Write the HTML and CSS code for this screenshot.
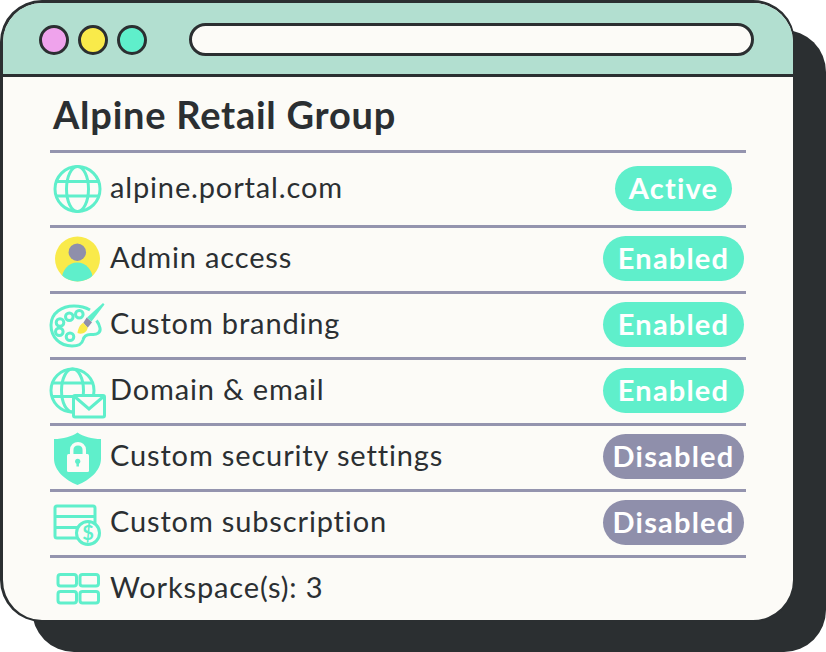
FILE: index.html
```html
<!DOCTYPE html>
<html lang="en">
<head>
<meta charset="utf-8">
<title>Alpine Retail Group</title>
<link rel="stylesheet" href="styles.css">
</head>
<body>
<div class="stage">
  <div class="backdrop"></div>
  <main class="window">
    <header class="titlebar">
      <div class="dots">
        <span class="dot dot-pink"></span>
        <span class="dot dot-yellow"></span>
        <span class="dot dot-teal"></span>
      </div>
      <div class="address"></div>
    </header>
    <section class="content">
      <h1 class="title">Alpine Retail Group</h1>
      <div class="row row-first">
        <svg class="icon" viewBox="50 158.500 60 60"><g class="line"><circle cx="77.500" cy="188.500" r="22.500"/><ellipse cx="77.500" cy="188.500" rx="11" ry="22.500"/><path d="M57 181H98M57 195.500H98"/></g></svg>
        <span class="label">alpine.portal.com</span>
        <span class="pill pill-on pill-short">Active</span>
      </div>
      <div class="row">
        <svg class="icon" viewBox="50 228.500 60 60"><defs><clipPath id="av"><circle cx="77.500" cy="258.500" r="22.500"/></clipPath></defs><circle class="yellow" cx="77.500" cy="258.500" r="22.500"/><g clip-path="url(#av)"><circle class="gray" cx="77.300" cy="251.700" r="8.700"/><ellipse class="teal" cx="77.300" cy="279" rx="15.500" ry="17"/></g></svg>
        <span class="label">Admin access</span>
        <span class="pill pill-on">Enabled</span>
      </div>
      <div class="row">
        <svg class="icon" viewBox="50 294.500 60 60"><g class="line"><path d="M90 309.500C85 306.500 80 305.500 74 305.500C62 305.500 51 312.500 51 324.500C51 337 60 345.500 72 345.500C78 345.500 82 343.500 83 339.500C84 335 87 333.500 92 334C97 334.500 101 332 100 327.500C99.500 325 98.500 322.500 96.500 320"/><circle cx="60" cy="322" r="3.800"/><circle cx="69.300" cy="316.300" r="3.800"/><circle cx="79.300" cy="313.700" r="3.800"/><circle cx="59.300" cy="331.300" r="3.800"/><circle cx="70" cy="336.300" r="3.800"/></g><path class="teal" d="M103 302.500L104.500 304L91.500 321L87 317Z"/><path class="gray" d="M86.700 317L92 321.700L87.700 327.300L83.300 322.300Z"/><path class="yellow" d="M83.300 322.300L87.700 327.300C87 332 82 334.500 77.500 332.500C78 328 80 324 83.300 322.300Z"/></svg>
        <span class="label">Custom branding</span>
        <span class="pill pill-on">Enabled</span>
      </div>
      <div class="row">
        <svg class="icon" viewBox="50 360.500 60 60"><g class="line"><circle cx="72.500" cy="390" r="21.500"/><ellipse cx="72.500" cy="390" rx="11" ry="21.500"/><path d="M52 382.500H93M52 396H93"/></g><rect class="line page" x="73.500" y="395" width="31" height="21.500" rx="1.500"/><path class="line" d="M74.500 396L89 408.500L103.500 396"/></svg>
        <span class="label">Domain &amp; email</span>
        <span class="pill pill-on">Enabled</span>
      </div>
      <div class="row">
        <svg class="icon" viewBox="50 426.500 60 60"><path class="teal" d="M77.500 432C83 436 92 438.500 101 438.500V458C101 470 90 479.500 77.500 484.500C65 479.500 54 470 54 458V438.500C63 438.500 72 436 77.500 432Z"/><path class="white-line" d="M71.700 455V449.500C71.700 441 84.300 441 84.300 449.500V455"/><rect class="white" x="67" y="453.500" width="22" height="18" rx="1.500"/><circle class="teal" cx="77.700" cy="460.800" r="2.600"/><path class="teal-line-thin" d="M77.700 461V466"/></svg>
        <span class="label">Custom security settings</span>
        <span class="pill pill-off">Disabled</span>
      </div>
      <div class="row">
        <svg class="icon" viewBox="50 492.500 60 60"><g class="line"><rect x="55" y="505.500" width="40" height="32" rx="2"/><path d="M55 516H95M55 527H95"/><circle class="page" cx="88" cy="532.500" r="11.500"/></g><text class="dollar" x="88" y="539.500">$</text></svg>
        <span class="label">Custom subscription</span>
        <span class="pill pill-off">Disabled</span>
      </div>
      <div class="row">
        <svg class="icon" viewBox="50 558.500 60 60"><g class="line"><rect x="58" y="574" width="18.500" height="11.500" rx="2.500"/><rect x="80" y="574" width="18.500" height="11.500" rx="2.500"/><rect x="58" y="591" width="18.500" height="11.500" rx="2.500"/><rect x="80" y="591" width="18.500" height="11.500" rx="2.500"/></g></svg>
        <span class="label">Workspace(s): 3</span>
      </div>
    </section>
  </main>
</div>
</body>
</html>
```
FILE: styles.css
```css
html, body { margin: 0; padding: 0; background: #fff; }
body { font-family: "Lato", "Noto Sans", sans-serif; color: #2b2f32; }

.stage { position: relative; width: 826px; height: 652px; overflow: hidden; }

.backdrop {
  position: absolute;
  left: 32px; top: 30px;
  width: 794px; height: 622px;
  background: #2b2f31;
  border-radius: 42px;
}

.window {
  position: absolute;
  left: 0; top: 0;
  box-sizing: border-box;
  width: 795px; height: 622px;
  background: #fcfbf7;
  border: solid #2b2f31;
  border-width: 3px 2px 2px 3px;
  border-radius: 42px;
  overflow: hidden;
}

.titlebar {
  box-sizing: border-box;
  height: 74px;
  display: flex;
  align-items: center;
  gap: 42px;
  padding: 2px 0 0 36px;
  background: #b2dfd0;
  border-bottom: 3px solid #2b2f31;
}

.dots { display: flex; gap: 9px; }
.dot {
  box-sizing: border-box;
  width: 30px; height: 30px;
  border: 3px solid #2b2f31;
  border-radius: 50%;
}
.dot-pink { background: #efa3ec; }
.dot-yellow { background: #f9ea4a; }
.dot-teal { background: #5fefcb; }

.address {
  box-sizing: border-box;
  width: 565px; height: 33px;
  background: #fcfbf7;
  border: 3px solid #2b2f31;
  border-radius: 17px;
}

.content { width: 696px; margin-left: 47px; }

.title {
  margin: 0;
  height: 73px;
  line-height: 74px;
  padding-left: 3px;
  font-size: 38px;
  font-weight: 700;
  letter-spacing: 0.75px;
}

.row {
  box-sizing: border-box;
  height: 66px;
  display: flex;
  align-items: center;
  border-top: 3px solid #9494ae;
  padding-bottom: 2px;
}
.row-first { height: 75px; padding-bottom: 1px; }
.row-first .pill { margin-right: 14px; }

.icon { width: 60px; height: 60px; flex: none; overflow: visible; }

.label {
  flex: 1;
  font-size: 29px;
  letter-spacing: 0.85px;
  line-height: 36px;
  padding-bottom: 3px;
  white-space: nowrap;
}

.pill {
  box-sizing: border-box;
  width: 141px; height: 45px;
  border-radius: 23px;
  margin-right: 2px;
  color: #fff;
  font-size: 29px;
  font-weight: 700;
  letter-spacing: 1.2px;
  line-height: 43px;
  text-align: center;
}
.pill-short { width: 117px; }
.pill-on { background: #5fefcb; }
.pill-off { background: #8f8fab; }

.line { fill: none; stroke: #5fefcb; stroke-width: 3; }
.page { fill: #fcfbf7; }
.teal { fill: #5fefcb; }
.yellow { fill: #f9ea4a; }
.gray { fill: #8f8fab; }
.white { fill: #fcfbf7; }
.white-line { fill: none; stroke: #fcfbf7; stroke-width: 3.500; }
.teal-line-thin { fill: none; stroke: #5fefcb; stroke-width: 2.500; }
.dollar { fill: #5fefcb; font-family: "Lato", sans-serif; font-size: 20px; font-weight: 700; text-anchor: middle; }
```
